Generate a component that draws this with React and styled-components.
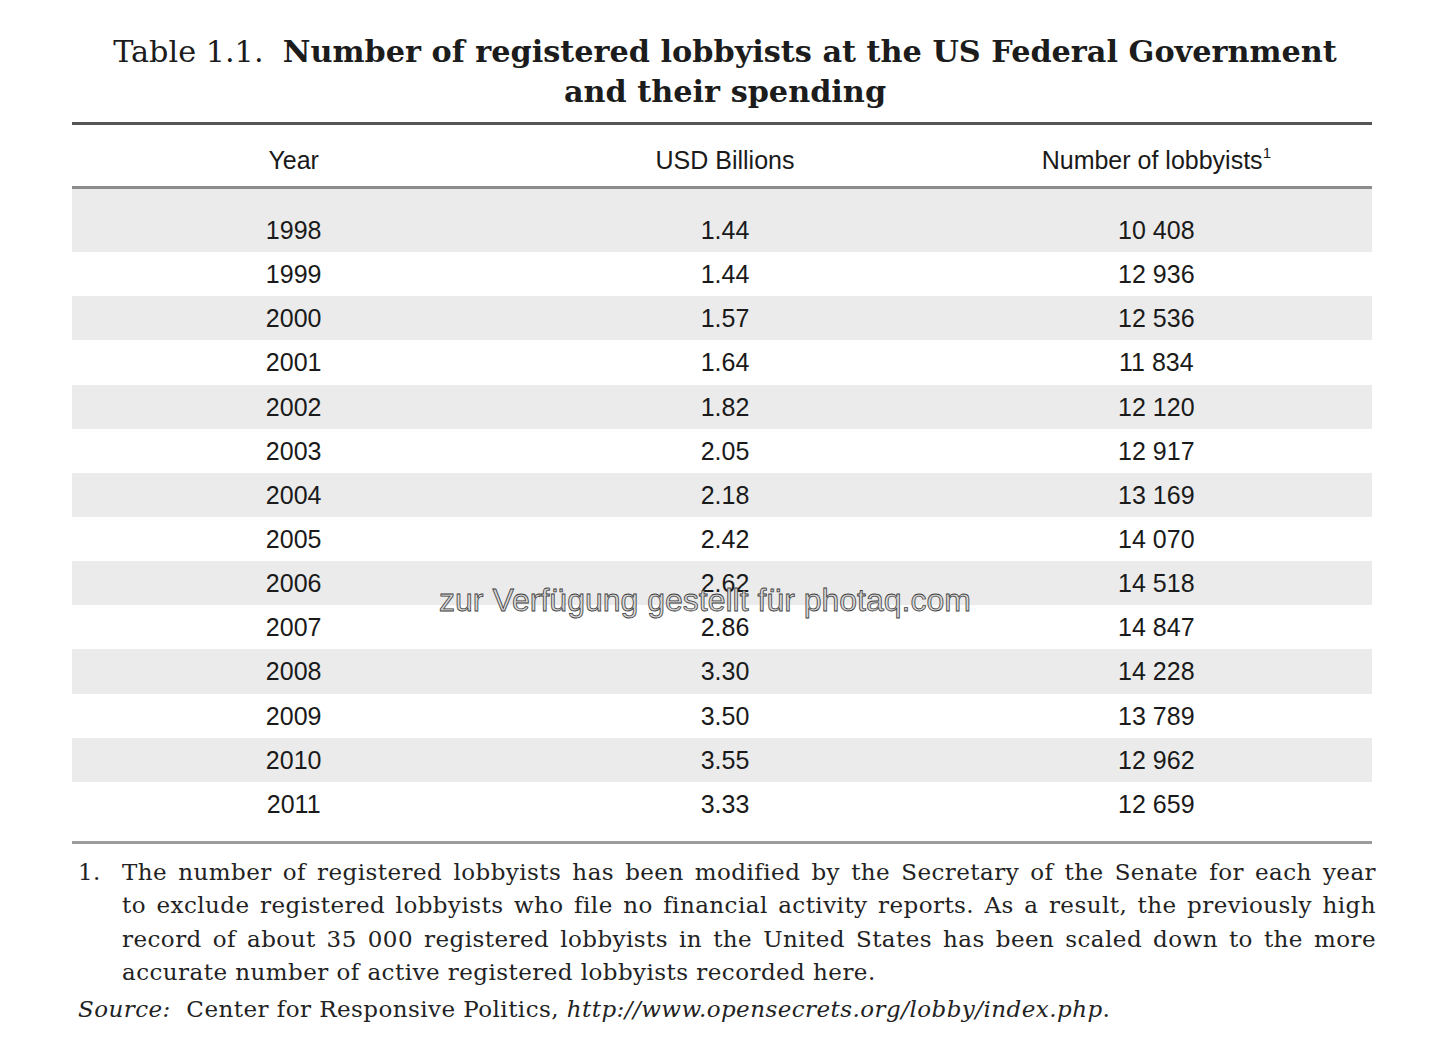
import React from 'react';
import styled, { createGlobalStyle } from 'styled-components';

const GlobalStyle = createGlobalStyle`
  body {
    margin: 0;
    background: #ffffff;
  }
`;

const rows = [
  ['1998', '1.44', '10 408'],
  ['1999', '1.44', '12 936'],
  ['2000', '1.57', '12 536'],
  ['2001', '1.64', '11 834'],
  ['2002', '1.82', '12 120'],
  ['2003', '2.05', '12 917'],
  ['2004', '2.18', '13 169'],
  ['2005', '2.42', '14 070'],
  ['2006', '2.62', '14 518'],
  ['2007', '2.86', '14 847'],
  ['2008', '3.30', '14 228'],
  ['2009', '3.50', '13 789'],
  ['2010', '3.55', '12 962'],
  ['2011', '3.33', '12 659'],
];

const LobbyTable = () => {
  return (
    <>
      <GlobalStyle />
      <Page>
        <Title>
          <TitleLabel>Table 1.1.&nbsp;&nbsp;</TitleLabel>
          <TitleBold>Number of registered lobbyists at the US Federal Government</TitleBold>
          <br />
          <TitleBold>and their spending</TitleBold>
        </Title>

        <Table>
          <HeaderRow>
            <Cell>Year</Cell>
            <Cell>USD Billions</Cell>
            <Cell>
              Number of lobbyists<Sup>1</Sup>
            </Cell>
          </HeaderRow>
          <Body>
            {rows.map((r, i) => (
              <Row key={r[0]} shaded={i % 2 === 0} first={i === 0}>
                <Cell>{r[0]}</Cell>
                <Cell>{r[1]}</Cell>
                <Cell>{r[2]}</Cell>
              </Row>
            ))}
            <Watermark>zur Verfügung gestellt für photaq.com</Watermark>
          </Body>
        </Table>

        <Notes>
          <NoteItem>
            <NoteNum>1.</NoteNum>
            <NoteText>
              <NoteLine justify>
                The number of registered lobbyists has been modified by the Secretary of the Senate for each year
              </NoteLine>
              <NoteLine justify>
                to exclude registered lobbyists who file no financial activity reports. As a result, the previously high
              </NoteLine>
              <NoteLine justify>
                record of about 35 000 registered lobbyists in the United States has been scaled down to the more
              </NoteLine>
              <NoteLine>accurate number of active registered lobbyists recorded here.</NoteLine>
            </NoteText>
          </NoteItem>
          <Source>
            <em>Source:</em>&nbsp;&nbsp;Center for Responsive Politics, <em>http://www.opensecrets.org/lobby/index.php</em>.
          </Source>
        </Notes>
      </Page>
    </>
  );
};

const Page = styled.div`
  width: 1300px;
  margin-left: 72px;
  padding-top: 32px;
`;

const Title = styled.h1`
  margin: 0;
  padding-left: 6px;
  text-align: center;
  font-family: 'DejaVu Serif', serif;
  font-size: 30.3px;
  line-height: 40px;
  color: #1c1c1c;
  font-weight: normal;
`;

const TitleLabel = styled.span`
  font-weight: normal;
`;

const TitleBold = styled.span`
  font-weight: bold;
`;

const Table = styled.div`
  margin-top: 10px;
  border-top: 3px solid #555555;
  font-family: 'Liberation Sans', Arial, sans-serif;
  font-size: 25px;
  color: #1a1a1a;
`;

const HeaderRow = styled.div`
  display: grid;
  grid-template-columns: repeat(3, 1fr);
  box-sizing: border-box;
  height: 64px;
  padding: 21px 0 0 6px;
  line-height: 28px;
  border-bottom: 3px solid #8c8c8c;
`;

const Cell = styled.div`
  text-align: center;
`;

const Sup = styled.sup`
  font-size: 15px;
  vertical-align: 11px;
  line-height: 0;
`;

const Body = styled.div`
  position: relative;
  padding-bottom: 15px;
  border-bottom: 3px solid #9c9c9c;
`;

const Row = styled.div`
  display: grid;
  grid-template-columns: repeat(3, 1fr);
  align-items: center;
  padding-top: ${(p) => (p.first ? '19px' : '0')};
  padding-left: 6px;
  height: 44.15px;
  line-height: 44.15px;
  background: ${(p) => (p.shaded ? '#ebebeb' : '#ffffff')};
`;

const Watermark = styled.div`
  position: absolute;
  top: 411px;
  left: 633px;
  transform: translate(-50%, -50%);
  white-space: nowrap;
  font-family: 'Liberation Sans', Arial, sans-serif;
  font-size: 32px;
  color: #d6d6d6;
  -webkit-text-stroke: 0.8px #3c3c3c;
`;

const Notes = styled.div`
  margin-top: 12px;
  width: 1304px;
  font-family: 'DejaVu Serif', serif;
  font-size: 23px;
  letter-spacing: 0.45px;
  line-height: 33.5px;
  color: #222222;
`;

const NoteItem = styled.div`
  display: flex;
`;

const NoteNum = styled.div`
  width: 50px;
  padding-left: 6px;
  box-sizing: border-box;
  flex-shrink: 0;
`;

const NoteText = styled.div`
  flex: 1;
`;

const NoteLine = styled.div`
  white-space: ${(p) => (p.justify ? 'normal' : 'nowrap')};
  text-align: ${(p) => (p.justify ? 'justify' : 'left')};
  text-align-last: ${(p) => (p.justify ? 'justify' : 'left')};
`;

const Source = styled.div`
  margin-top: 3px;
  padding-left: 6px;
`;

export default LobbyTable;
